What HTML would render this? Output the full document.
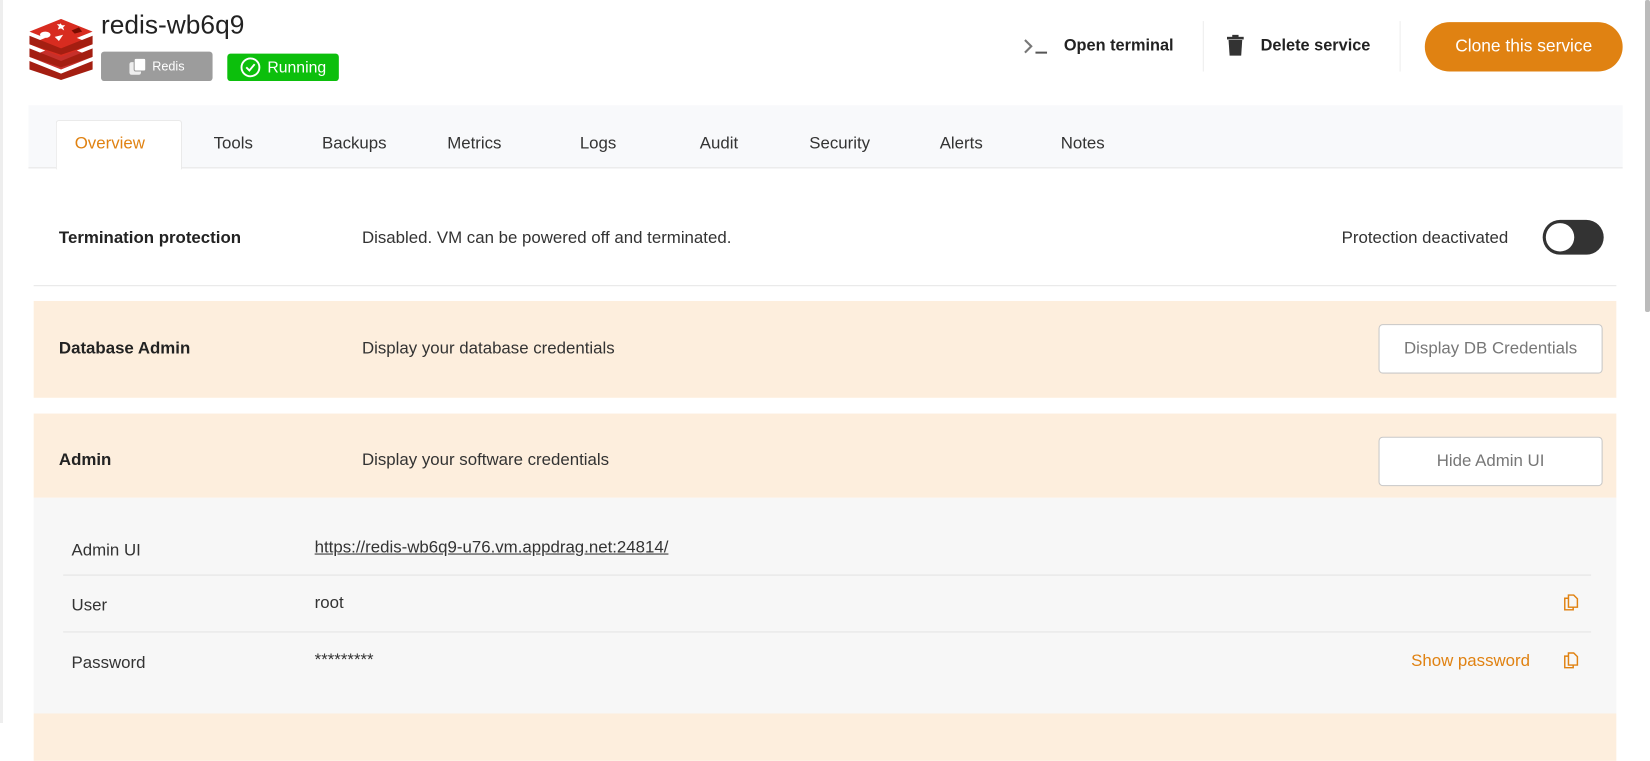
<!DOCTYPE html>
<html><head><style>
*{box-sizing:border-box;margin:0;padding:0}
body{width:1650px;height:723px;overflow:hidden;background:#fff;font-family:"Liberation Sans",sans-serif;color:#222;position:relative}
.abs{position:absolute}
#w{position:absolute;left:0;top:0;width:1568px;height:690px;transform:scale(1.0523);transform-origin:0 0}
.t{font-size:16px;color:#333}
.btn{position:absolute;border:1px solid #c8c8c8;border-radius:4px;background:#fff;color:#777;font-size:16px;display:flex;align-items:center;justify-content:center}
</style></head><body>
<div class="abs" style="left:0;top:0;width:3px;height:723px;background:#eee"></div>
<div class="abs" style="left:1645px;top:0;width:5px;height:312px;background:#bbb;border-radius:2px"></div>
<div id="w">
<svg class="abs" style="left:26px;top:18px" width="64" height="58" viewBox="0 0 64 58">
<path d="M2 40 L32 52 L62 40 L62 48 L32 58 L2 48Z" fill="#a41e11"/>
<path d="M2 36 L32 24 L62 36 L32 48Z" fill="#c6302b"/>
<path d="M2 28 L32 40 L62 28 L62 36 L32 46 L2 36Z" fill="#a41e11"/>
<path d="M2 24 L32 12 L62 24 L32 36Z" fill="#d82c20"/>
<path d="M2 16 L32 28 L62 16 L62 24 L32 34 L2 24Z" fill="#a41e11"/>
<path d="M2 12 L32 0 L62 12 L32 24Z" fill="#d82c20"/>
<ellipse cx="17" cy="15" rx="5" ry="3" fill="#fff"/><path d="M26 17 L34 15 L30 21Z" fill="#fff"/><path d="M31 4l2 2 3 0-2 2 1 3-3-2-3 1 1-3-2-2 3 0z" fill="#fff"/><path d="M42 11 L49 8 L52 12 L45 14Z" fill="#7a0c00"/>
</svg>
<div class="abs" style="left:96px;top:10px;font-size:25px;color:#222">redis-wb6q9</div>
<div class="abs" style="left:96px;top:49px;width:106px;height:28px;background:#9c9c9c;border-radius:3px;color:#fff;font-size:12px;display:flex;align-items:center;justify-content:center;gap:6px"><span style="display:inline-block;width:16px;height:16px;position:relative"><span style="position:absolute;left:0;top:4px;width:11px;height:12px;background:#eee;border-radius:2px"></span><span style="position:absolute;left:4px;top:0;width:12px;height:13px;background:#fff;border:1px solid #9c9c9c;border-radius:2px"></span></span>Redis</div>
<div class="abs" style="left:216px;top:51px;width:106px;height:26px;background:#0cbf0c;border-radius:3px;color:#fff;font-size:15px;display:flex;align-items:center;justify-content:center;gap:6px"><svg width="20" height="20" viewBox="0 0 20 20"><circle cx="10" cy="10" r="8.5" fill="none" stroke="#fff" stroke-width="1.8"/><path d="M6 10l3 3 5-6" fill="none" stroke="#fff" stroke-width="1.8"/></svg>Running</div>
<svg class="abs" style="left:972px;top:35px" width="26" height="18"><path d="M2 3l6 6-6 6" fill="none" stroke="#777" stroke-width="2"/><path d="M12 15h11" stroke="#555" stroke-width="2"/></svg>
<div class="abs" style="left:1011px;top:35px;font-size:15.5px;font-weight:bold;color:#222">Open terminal</div>
<div class="abs" style="left:1143px;top:20px;width:1px;height:48px;background:#eee"></div>
<svg class="abs" style="left:1166px;top:33px" width="16" height="20"><rect x="0" y="2" width="16" height="2.5" fill="#333"/><rect x="5" y="0" width="6" height="3" fill="#333"/><path d="M1.5 5h13l-1 15h-11z" fill="#333"/></svg>
<div class="abs" style="left:1198px;top:35px;font-size:15.5px;font-weight:bold;color:#222">Delete service</div>
<div class="abs" style="left:1330px;top:20px;width:1px;height:48px;background:#eee"></div>
<div class="abs" style="left:1354px;top:21px;width:188px;height:47px;background:#e08212;border-radius:24px;color:#fff;font-size:16.5px;display:flex;align-items:center;justify-content:center">Clone this service</div>
<div class="abs" style="left:27px;top:100px;width:1515px;height:60px;background:#f8f9fb;border-bottom:1px solid #e6e6e6"></div>
<div class="abs" style="left:53px;top:114px;width:120px;height:47px;background:#fff;border:1px solid #eaeaea;border-bottom:none;border-radius:3px 3px 0 0"></div>
<div class="abs t" style="left:71px;top:128px;color:#e08212">Overview</div>
<div class="abs t" style="left:203px;top:128px">Tools</div>
<div class="abs t" style="left:306px;top:128px">Backups</div>
<div class="abs t" style="left:425px;top:128px">Metrics</div>
<div class="abs t" style="left:551px;top:128px">Logs</div>
<div class="abs t" style="left:665px;top:128px">Audit</div>
<div class="abs t" style="left:769px;top:128px">Security</div>
<div class="abs t" style="left:893px;top:128px">Alerts</div>
<div class="abs t" style="left:1008px;top:128px">Notes</div>
<div class="abs t" style="left:56px;top:218px;font-weight:bold;color:#222">Termination protection</div>
<div class="abs t" style="left:344px;top:218px">Disabled. VM can be powered off and terminated.</div>
<div class="abs t" style="left:1275px;top:218px">Protection deactivated</div>
<div class="abs" style="left:1466px;top:209px;width:58px;height:33px;background:#333;border-radius:17px"><div style="position:absolute;left:3px;top:3px;width:27px;height:27px;border-radius:50%;background:#fff"></div></div>
<div class="abs" style="left:32px;top:271px;width:1504px;height:1px;background:#e6e6e6"></div>
<div class="abs" style="left:32px;top:286px;width:1504px;height:92px;background:#fdeedd"></div>
<div class="abs t" style="left:56px;top:323px;font-weight:bold;color:#222">Database Admin</div>
<div class="abs t" style="left:344px;top:323px">Display your database credentials</div>
<div class="btn" style="left:1310px;top:308px;width:213px;height:47px">Display DB Credentials</div>
<div class="abs" style="left:32px;top:393px;width:1504px;height:80px;background:#fdeedd"></div>
<div class="abs t" style="left:56px;top:429px;font-weight:bold;color:#222">Admin</div>
<div class="abs t" style="left:344px;top:429px">Display your software credentials</div>
<div class="btn" style="left:1310px;top:415px;width:213px;height:47px">Hide Admin UI</div>
<div class="abs" style="left:32px;top:473px;width:1504px;height:205px;background:#f7f7f7"></div>
<div class="abs" style="left:32px;top:678px;width:1504px;height:45px;background:#fdeedd"></div>
<div class="abs t" style="left:68px;top:515px">Admin UI</div>
<div class="abs t" style="left:299px;top:512px;text-decoration:underline">https://redis-wb6q9-u76.vm.appdrag.net:24814/</div>
<div class="abs" style="left:60px;top:546px;width:1452px;height:1px;background:#e4e4e4"></div>
<div class="abs t" style="left:68px;top:567px">User</div>
<div class="abs t" style="left:299px;top:565px">root</div>
<div class="abs" style="left:60px;top:600px;width:1452px;height:1px;background:#e4e4e4"></div>
<div class="abs t" style="left:68px;top:622px">Password</div>
<div class="abs t" style="left:299px;top:619px">*********</div>
<div class="abs t" style="left:1341px;top:620px;color:#e08212">Show password</div>
<svg class="abs" style="left:1485px;top:564px" width="16" height="17" viewBox="0 0 16 17"><path d="M5.5 1.5h5l3.5 3.5v8h-8.5z" fill="none" stroke="#e08212" stroke-width="1.4"/><path d="M5.5 4.5h-3.5v11h8v-2.5" fill="none" stroke="#e08212" stroke-width="1.4"/></svg>
<svg class="abs" style="left:1485px;top:619px" width="16" height="17" viewBox="0 0 16 17"><path d="M5.5 1.5h5l3.5 3.5v8h-8.5z" fill="none" stroke="#e08212" stroke-width="1.4"/><path d="M5.5 4.5h-3.5v11h8v-2.5" fill="none" stroke="#e08212" stroke-width="1.4"/></svg>
</div>
</body></html>
